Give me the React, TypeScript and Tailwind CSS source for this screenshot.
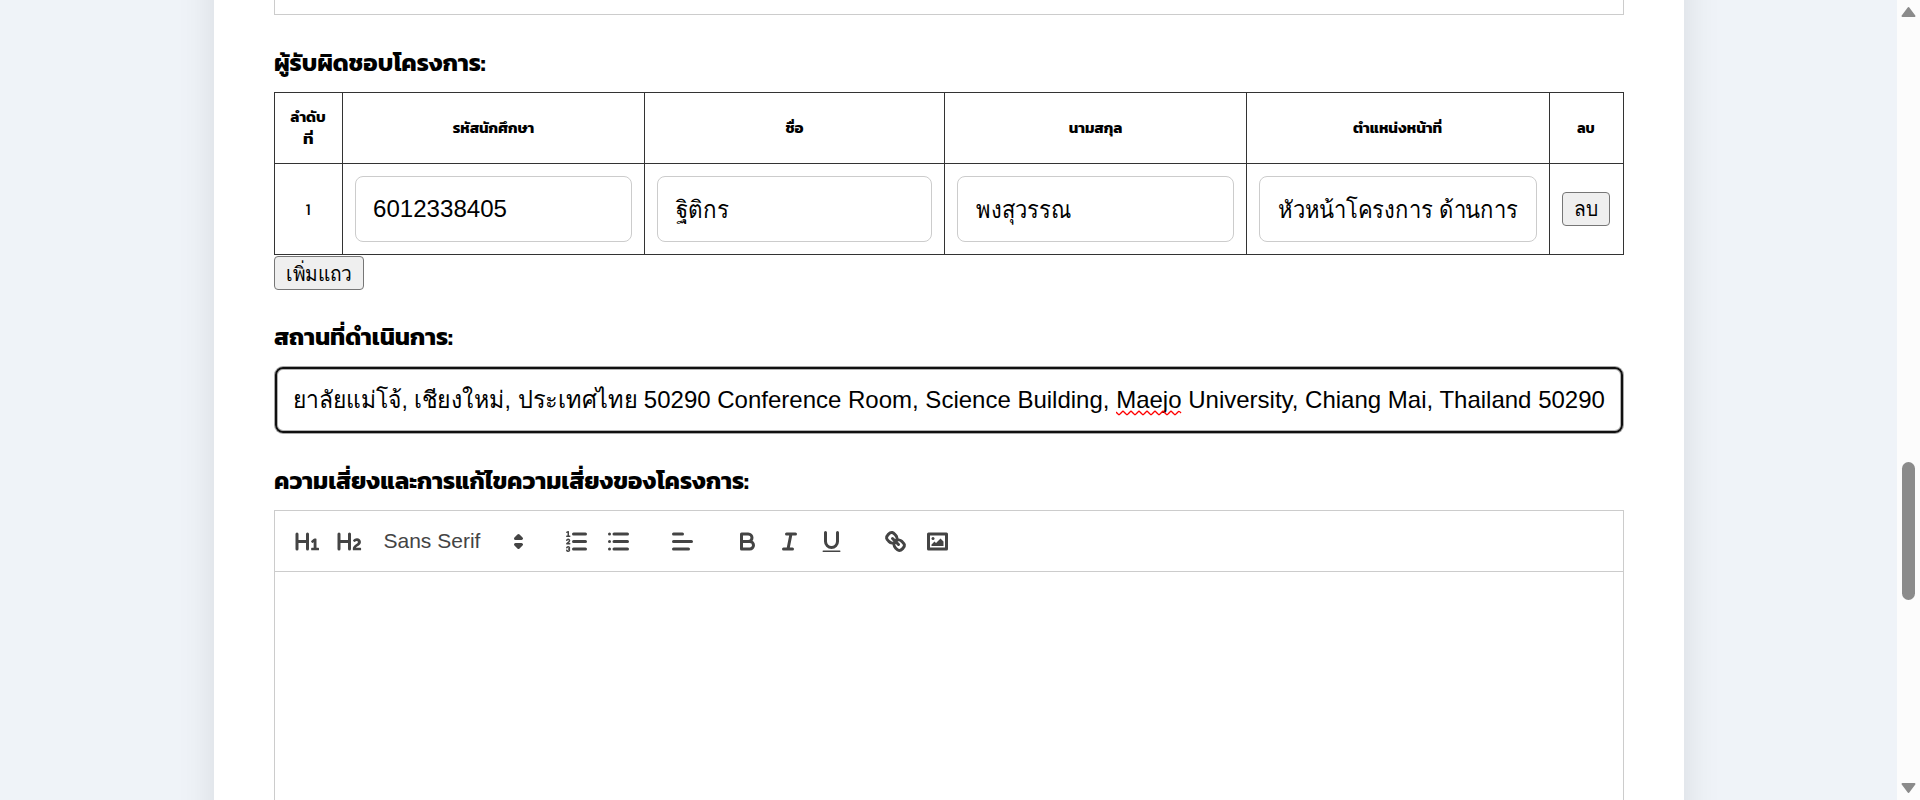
import React from "react";

const thai = "font-['Kanit','Noto_Sans_Thai','Liberation_Sans',sans-serif]";
const arial = "font-['Liberation_Sans',sans-serif]";

function Icon({ children }: { children: React.ReactNode }) {
  return (
    <span className="flex h-9 w-[42px] items-center justify-center">
      <svg viewBox="0 0 18 18" className="h-[27px] w-[27px]" fill="none" stroke="#444" strokeWidth="2" strokeLinecap="round" strokeLinejoin="round">
        {children}
      </svg>
    </span>
  );
}

function Fit({ text, w, size, className = "" }: { text: string; w: number; size: string; className?: string }) {
  const ref = React.useRef<HTMLSpanElement>(null);
  const [s, setS] = React.useState(1);
  React.useLayoutEffect(() => {
    if (ref.current) setS(w / ref.current.offsetWidth);
  }, [w]);
  return (
    <span ref={ref} className={`inline-block origin-left whitespace-pre ${size} ${className}`} style={{ transform: `scaleX(${s})`, marginRight: ref.current ? w - ref.current.offsetWidth : 0 }}>
      {text}
    </span>
  );
}

function Field({ text, w, className = "" }: { text: string; w: number; className?: string }) {
  return (
    <div className={`flex h-[66px] w-full items-center rounded-lg border border-[#ccc] pl-[17px] ${arial}`}>
      <Fit text={text} w={w} size="text-[24px]" className={className} />
    </div>
  );
}

const head = "flex items-center justify-center border-r border-b border-[#333] font-bold";
const cell = "flex items-center justify-center border-r border-b border-[#333] px-3";
const button = `flex h-[34px] items-center justify-center rounded-[4px] border border-[#767676] bg-[#efefef] ${arial}`;

export default function App() {
  return (
    <div className={`flex h-[800px] w-[1920px] overflow-hidden bg-[#eff3f8] text-black ${thai}`}>
      <div className="-my-[60px] flex h-[920px] flex-1 overflow-hidden pl-[214px]">
        <main className="flex h-[920px] w-[1470px] flex-col bg-white px-[60px] pt-[60px] shadow-[0_0_36px_rgba(0,0,0,0.1)]">
          <div className="h-[15px] shrink-0 border-x border-b border-[#ccc]" />
          <div className="flex h-[77px] shrink-0 items-center pt-[18px] font-bold">
            <Fit text="ผู้รับผิดชอบโครงการ:" w={211} size="text-[24px]" />
          </div>
          <div className="grid shrink-0 grid-cols-[68px_302px_300px_302px_303px_74px] grid-rows-[71px_91px] border-t border-l border-[#333] text-[15px]">
            <div className={`${head} flex-col pr-px leading-[22px]`}>
              <Fit text="ลำดับ" w={35} size="text-[15px]" />
              <Fit text="ที่" w={10} size="text-[15px]" />
            </div>
            <div className={head}><Fit text="รหัสนักศึกษา" w={81} size="text-[15px]" /></div>
            <div className={head}><Fit text="ชื่อ" w={18} size="text-[15px]" /></div>
            <div className={head}><Fit text="นามสกุล" w={54} size="text-[15px]" /></div>
            <div className={head}><Fit text="ตำแหน่งหน้าที่" w={89} size="text-[15px]" /></div>
            <div className={`${head} pr-px`}><Fit text="ลบ" w={18} size="text-[15px]" /></div>
            <div className={`${cell} pr-[13px] text-[16px]`}>1</div>
            <div className={cell}><Field text="6012338405" w={133.5} /></div>
            <div className={cell}><Field text="ฐิติกร" w={53} className="ml-px pt-[2px]" /></div>
            <div className={cell}><Field text="พงสุวรรณ" w={95} className="ml-px pt-[2px]" /></div>
            <div className={cell}><Field text="หัวหน้าโครงการ ด้านการ" w={240} className="ml-px pt-[2px]" /></div>
            <div className={`${cell} pr-[13px]`}>
              <div className={`${button} w-12 shrink-0`}><Fit text="ลบ" w={24} size="text-[20px]" /></div>
            </div>
          </div>
          <div className={`${button} mt-px w-[90px] shrink-0`}><Fit text="เพิ่มแถว" w={66} size="text-[20px]" className="pt-[2px]" /></div>
          <div className="flex h-[77px] shrink-0 items-center pt-[17px] font-bold">
            <Fit text="สถานที่ดำเนินการ:" w={179} size="text-[24px]" />
          </div>
          <div className={`mx-px flex h-[66px] shrink-0 items-center rounded-[8px] border-2 border-[#101010] pl-[16px] text-[24px] whitespace-pre shadow-[0_0_0_1px_#a8a8a8,inset_0_0_0_1px_#b0b0b0] ${arial}`}>
            <Fit text="ยาลัยแม่โจ้, " w={121} size="text-[24px]" />
            <Fit text="เชียงใหม่, " w={103} size="text-[24px]" />
            <Fit text="ประเทศไทย " w={126.5} size="text-[24px]" />
            <span>50290 Conference Room, Science Building, </span>
            <span className="relative">
              Maejo
              <svg className="absolute top-[28px] left-0 h-[6px] w-[66px]" viewBox="0 0 66 6" fill="none" stroke="#f00" strokeWidth="1.3">
                <path d="M0 2L2 4Q3 5.5 4 4L6 2Q7 .5 8 2L10 4Q11 5.5 12 4L14 2Q15 .5 16 2L18 4Q19 5.5 20 4L22 2Q23 .5 24 2L26 4Q27 5.5 28 4L30 2Q31 .5 32 2L34 4Q35 5.5 36 4L38 2Q39 .5 40 2L42 4Q43 5.5 44 4L46 2Q47 .5 48 2L50 4Q51 5.5 52 4L54 2Q55 .5 56 2L58 4Q59 5.5 60 4L62 2Q63 .5 65 3" />
              </svg>
            </span>
            <span> University, Chiang Mai, Thailand 50290</span>
          </div>
          <div className="flex h-[77px] shrink-0 items-center pt-[18px] font-bold">
            <Fit text="ความเสี่ยงและการแก้ไขความเสี่ยงของโครงการ:" w={475} size="text-[24px]" />
          </div>
          <div className="flex flex-1 flex-col border-x border-t border-[#ccc]">
            <div className="flex h-[61px] shrink-0 items-center border-b border-[#ccc] pl-[11.5px]">
              <Icon>
                <path fill="#444" stroke="none" d="M10,4V14a1,1,0,0,1-2,0V10H3v4a1,1,0,0,1-2,0V4A1,1,0,0,1,3,4V8H8V4a1,1,0,0,1,2,0Zm6.06787,9.209H14.98975V7.59863a.54085.54085,0,0,0-.605-.60547h-.62744a1.01119,1.01119,0,0,0-.748.29688L11.645,8.56641a.5435.5435,0,0,0-.022.8584l.28613.30762a.53861.53861,0,0,0,.84717.0332l.09912-.08789a1.2137,1.2137,0,0,0,.2417-.35254h.02246s-.01123.30859-.01123.60547V13.209H12.041a.54085.54085,0,0,0-.605.60547v.43945a.54085.54085,0,0,0,.605.60547h4.02686a.54085.54085,0,0,0,.605-.60547v-.43945A.54085.54085,0,0,0,16.06787,13.209Z" />
              </Icon>
              <Icon>
                <path fill="#444" stroke="none" d="M16.73975,13.81445v.43945a.54085.54085,0,0,1-.605.60547H11.855a.58392.58392,0,0,1-.64893-.60547V14.0127c0-2.90527,3.39941-3.42187,3.39941-4.55469a.77675.77675,0,0,0-.84717-.78125,1.17684,1.17684,0,0,0-.83594.38477c-.2749.26367-.561.374-.85791.13184l-.4292-.34082c-.30811-.24219-.38525-.51758-.1543-.81445a2.97155,2.97155,0,0,1,2.45361-1.17676,2.45393,2.45393,0,0,1,2.68408,2.40918c0,2.45312-3.1792,2.92676-3.27832,3.93848h2.79443A.54085.54085,0,0,1,16.73975,13.81445ZM9,3A.99974.99974,0,0,0,8,4V8H3V4A1,1,0,0,0,1,4V14a1,1,0,0,0,2,0V10H8v4a1,1,0,0,0,2,0V4A.99974.99974,0,0,0,9,3Z" />
              </Icon>
              <div className={`flex h-9 w-[162px] items-center justify-between pr-[1px] pl-[13px] text-[21px] text-[#444] ${arial}`}>
                <span>Sans Serif</span>
                <svg viewBox="0 0 18 18" className="h-[27px] w-[27px]" fill="#444" stroke="#444" strokeWidth="2" strokeLinejoin="round">
                  <path d="M7 11L9 13L11 11ZM7 7L9 5L11 7Z" />
                </svg>
              </div>
              <div className="ml-[22.5px] flex">
                <Icon>
                  <path d="M7 4H15M7 9H15M7 14H15" />
                  <path strokeWidth="1" d="M2.5 5.5H4.5" />
                  <path fill="#444" stroke="none" d="M3.5,6A0.5,0.5,0,0,1,3,5.5V3.085l-0.276.138A0.5,0.5,0,0,1,2.053,3c-0.124-.247-0.023-0.324.224-0.447l1-.5A0.5,0.5,0,0,1,4,2.5v3A0.5,0.5,0,0,1,3.5,6Z" />
                  <path strokeWidth="1" d="M4.5,10.5h-2c0-.234,1.85-1.076,1.85-2.234A0.959,0.959,0,0,0,2.5,8.156" />
                  <path strokeWidth="1" d="M2.5,14.846a0.959,0.959,0,0,0,1.85-.109A0.7,0.7,0,0,0,3.75,14a0.688,0.688,0,0,0,.6-0.736,0.959,0.959,0,0,0-1.85-.109" />
                </Icon>
                <Icon><path d="M6 4H15M6 9H15M6 14H15M3 4H3M3 9H3M3 14H3" /></Icon>
              </div>
              <div className="ml-[22.5px] flex">
                <Icon><path d="M3 9H15M3 14H13M3 4H9" /></Icon>
              </div>
              <div className="ml-[22.5px] flex">
                <Icon>
                  <path d="M5,4H9.5A2.5,2.5,0,0,1,12,6.5v0A2.5,2.5,0,0,1,9.5,9H5A0,0,0,0,1,5,9V4ZM5,9h5.5A2.5,2.5,0,0,1,13,11.5v0A2.5,2.5,0,0,1,10.5,14H5V9Z" />
                </Icon>
                <Icon><path d="M7 4H13M5 14H11M8 14L10 4" /></Icon>
                <Icon>
                  <path d="M5,3V9a4.012,4.012,0,0,0,4,4H9a4.012,4.012,0,0,0,4-4V3" />
                  <rect fill="#444" stroke="none" height="1" rx="0.5" ry="0.5" width="12" x="3" y="15" />
                </Icon>
              </div>
              <div className="ml-[22.5px] flex">
                <Icon>
                  <path d="M7 7L11 11M8.9,4.577a3.476,3.476,0,0,1,.36,4.679A3.476,3.476,0,0,1,4.577,8.9C3.185,7.5,2.035,6.4,4.217,4.217S7.5,3.185,8.9,4.577ZM13.423,9.1a3.476,3.476,0,0,0-4.679-.36,3.476,3.476,0,0,0,.36,4.679c1.392,1.392,2.5,2.542,4.679.36S14.815,10.5,13.423,9.1Z" />
                </Icon>
                <Icon>
                  <rect x="3" y="4" width="12" height="10" />
                  <circle cx="6" cy="7" r="1" fill="#444" stroke="none" />
                  <path fill="#444" stroke="none" d="M5 12V11L7 9L8 10L11 7L13 9V12Z" />
                </Icon>
              </div>
            </div>
          </div>
        </main>
      </div>
      <div className="flex h-[800px] w-[23px] flex-col items-center bg-[#fcfcfc] py-[6px]">
        <svg viewBox="0 0 15 12" className="h-3 w-[15px] shrink-0" fill="#8b8b8b" stroke="#8b8b8b" strokeWidth="2" strokeLinejoin="round"><path d="M1.5 10L7.5 2L13.5 10Z" /></svg>
        <div className="mt-[444px] mb-auto h-[138px] w-[13px] shrink-0 rounded-full bg-[#8b8b8b]" />
        <svg viewBox="0 0 15 12" className="h-3 w-[15px] shrink-0" fill="#8b8b8b" stroke="#8b8b8b" strokeWidth="2" strokeLinejoin="round"><path d="M1.5 2L7.5 10L13.5 2Z" /></svg>
      </div>
    </div>
  );
}
